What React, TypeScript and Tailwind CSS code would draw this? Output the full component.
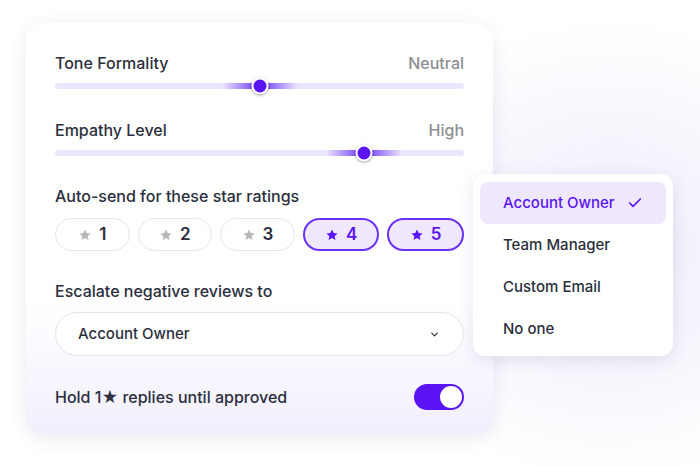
import { Check, ChevronDown } from 'lucide-react'

const font = { fontFamily: 'Inter, "Noto Sans", sans-serif' }

function Star({ className }: { className: string }) {
  return (
    <svg viewBox="0 0 24 24" className={className} fill="currentColor">
      <path d="M12 2.5l2.9 6.1 6.6.8-4.9 4.6 1.3 6.6L12 17.3l-5.9 3.3 1.3-6.6-4.9-4.6 6.6-.8z" />
    </svg>
  )
}

function Slider({ label, value, pct }: { label: string; value: string; pct: number }) {
  return (
    <div>
      <div className="flex items-center justify-between h-6">
        <span className="text-[16px] font-medium text-[#2b2f3d]">{label}</span>
        <span className="text-[16px] font-medium text-[#8e8e93]">{value}</span>
      </div>
      <div className="relative mt-2 h-[6px] rounded-full bg-[#ece6fd]">
        <div
          className="absolute top-0 h-[6px] w-[76px] -translate-x-1/2 bg-[linear-gradient(90deg,rgba(98,40,245,0)_0%,rgba(98,40,245,0.95)_50%,rgba(98,40,245,0)_100%)]"
          style={{ left: `${pct}%` }}
        />
        <div
          className="absolute top-1/2 h-[17px] w-[17px] -translate-x-1/2 -translate-y-1/2 rounded-full border-2 border-white bg-[#5a14f4] shadow-[0_1px_3px_rgba(0,0,0,0.35)]"
          style={{ left: `${pct}%` }}
        />
      </div>
    </div>
  )
}

export default function App() {
  const ratings = [1, 2, 3, 4, 5]
  const options = ['Account Owner', 'Team Manager', 'Custom Email', 'No one']

  return (
    <div
      style={font}
      className="relative w-[700px] h-[466px] overflow-hidden bg-[radial-gradient(ellipse_260px_230px_at_610px_250px,#efedfb_0%,#f7f6fd_55%,#ffffff_100%)] pt-[23px] pl-[26px]"
    >
      <div className="w-[467px] h-[411px] rounded-[18px] bg-[linear-gradient(180deg,#ffffff_0%,#ffffff_68%,#f7f5fe_88%,#f1eefc_100%)] shadow-[0_4px_18px_rgba(60,50,120,0.10)] px-[29px] pt-[28px]">
        <Slider label="Tone Formality" value="Neutral" pct={50} />
        <div className="mt-[29px]">
          <Slider label="Empathy Level" value="High" pct={75.5} />
        </div>

        <div className="mt-[28px] text-[16px] font-medium text-[#2b2f3d] h-6 leading-6">Auto-send for these star ratings</div>
        <div className="mt-[10px] flex gap-[8px]">
          {ratings.map(r => {
            const on = r >= 4
            return (
              <div
                key={r}
                className={
                  on
                    ? 'flex h-[33px] flex-1 items-center justify-center gap-[7px] rounded-full border-2 border-[#6a30f6] bg-[#efe8fe] text-[#5a14f4]'
                    : 'flex h-[33px] flex-1 items-center justify-center gap-[7px] rounded-full border border-[#e6e6ea] bg-white text-[#2b2f3d]'
                }
              >
                <Star className={on ? 'h-[14px] w-[14px] text-[#5a14f4]' : 'h-[14px] w-[14px] text-[#b8b8bc]'} />
                <span className="text-[17px] font-semibold leading-none">{r}</span>
              </div>
            )
          })}
        </div>

        <div className="mt-[28px] text-[16px] font-medium text-[#2b2f3d] h-6 leading-6">Escalate negative reviews to</div>
        <div className="mt-[9px] flex h-[44px] items-center justify-between rounded-full border border-[#e6e6ea] bg-white pl-[22px] pr-[23px]">
          <span className="text-[15px] font-medium text-[#2b2f3d]">Account Owner</span>
          <ChevronDown size={11} strokeWidth={2.6} className="text-[#2b2f3d]" />
        </div>

        <div className="mt-[28px] flex h-[26px] items-center justify-between">
          <span className="text-[16px] font-medium text-[#2b2f3d]">Hold 1★ replies until approved</span>
          <div className="flex h-[26px] w-[50px] items-center justify-end rounded-full bg-[#5a14f4] pr-[2px]">
            <div className="h-[22px] w-[22px] rounded-full bg-white" />
          </div>
        </div>
      </div>

      <div className="absolute left-[473px] top-[174px] w-[200px] rounded-[12px] bg-white px-[7px] pt-[8px] pb-[6px] shadow-[0_4px_16px_rgba(60,50,120,0.12)]">
        {options.map((o, i) => (
          <div
            key={o}
            className={
              i === 0
                ? 'flex h-[42px] items-center justify-between rounded-[8px] bg-[#efe8fd] pl-[23px] pr-[23px] text-[15px] font-medium text-[#5a14f4]'
                : 'flex h-[42px] items-center pl-[23px] text-[15px] font-medium text-[#2b2f3d]'
            }
          >
            <span>{o}</span>
            {i === 0 && <Check size={16} strokeWidth={2.5} className="text-[#5a14f4]" />}
          </div>
        ))}
      </div>
    </div>
  )
}
